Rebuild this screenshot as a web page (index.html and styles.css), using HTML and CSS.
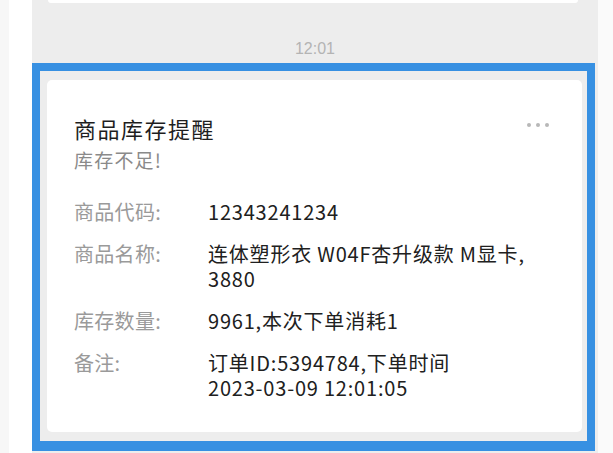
FILE: index.html
```html
<!DOCTYPE html>
<html lang="zh-CN">
<head>
<meta charset="utf-8">
<title>商品库存提醒</title>
<link rel="stylesheet" href="styles.css">
</head>
<body>
<div class="screen">
  <div class="rail"></div>
  <div class="gutter"></div>
  <div class="chat">
    <div class="prev-card"></div>
    <div class="time">12:01</div>
    <div class="selected">
      <div class="card">
        <div class="card-head">
          <div class="head-text">
            <div class="title">商品库存提醒</div>
            <div class="subtitle">库存不足!</div>
          </div>
          <div class="more"><i></i><i></i><i></i></div>
        </div>
        <div class="rows">
          <div class="row"><div class="label">商品代码:</div><div class="value">12343241234</div></div>
          <div class="row"><div class="label">商品名称:</div><div class="value"><span class="line">连体塑形衣 W04F杏升级款 M显卡,</span><span class="line">3880</span></div></div>
          <div class="row"><div class="label">库存数量:</div><div class="value">9961,本次下单消耗1</div></div>
          <div class="row"><div class="label">备注:</div><div class="value"><span class="line">订单ID:5394784,下单时间</span><span class="line">2023-03-09 12:01:05</span></div></div>
        </div>
      </div>
      <div class="handle"></div>
    </div>
  </div>
  <div class="edge"></div>
</div>
</body>
</html>
```

FILE: styles.css
```css
* { box-sizing: border-box; }
html, body { margin: 0; padding: 0; }
body {
  background: #ffffff;
  font-family: "Noto Sans CJK SC", "Noto Sans", sans-serif;
  width: 613px;
  height: 453px;
  overflow: hidden;
}
.screen {
  display: flex;
  height: 453px;
}
.rail { width: 9px; background: #f7f7f7; }
.gutter { width: 23px; background: #ffffff; }
.chat {
  width: 566px;
  background: #ededed;
  display: flex;
  flex-direction: column;
}
.edge { flex: 1; background: #fafafa; }
.prev-card {
  height: 3px;
  margin: 0 20px 0 16px;
  background: #ffffff;
  border-radius: 0 0 4px 4px;
}
.time {
  margin-top: 36px;
  height: 20px;
  line-height: 20px;
  margin-bottom: 4px;
  text-align: center;
  font-family: "Liberation Sans", "Noto Sans", sans-serif;
  font-size: 16px;
  color: #b4b4b4;
}
.selected {
  position: relative;
  margin-right: 3px;
  border: 8px solid #3790e2;
  border-bottom-width: 10px;
  padding: 9px 5px 9px 7px;
}
.card {
  background: #ffffff;
  border-radius: 5px;
  padding: 33px 33px 32px 27px;
}
.card-head {
  display: flex;
  justify-content: space-between;
  align-items: flex-start;
}
.title {
  font-size: 22px;
  line-height: 30px;
  letter-spacing: 1.5px;
  color: #1e1e1e;
}
.subtitle {
  margin-top: 3px;
  font-size: 19px;
  line-height: 28px;
  letter-spacing: 1.2px;
  color: #8a8a8a;
}
.more {
  display: flex;
  gap: 5px;
  margin-top: 10px;
}
.more i {
  width: 4px;
  height: 4px;
  border-radius: 50%;
  background: #b8b8b8;
}
.rows {
  margin-top: 25px;
  display: flex;
  flex-direction: column;
  gap: 17px;
}
.row {
  display: flex;
  font-size: 20px;
  line-height: 25px;
}
.label {
  width: 134px;
  flex: none;
  color: #9a9a9a;
  letter-spacing: 0.3px;
}
.value {
  display: flex;
  flex-direction: column;
  color: #202020;
  letter-spacing: 0.8px;
}
.line { display: block; }
.handle {
  position: absolute;
  left: 503px;
  bottom: -5px;
  width: 17px;
  height: 5px;
  background: #3790e2;
}
```
